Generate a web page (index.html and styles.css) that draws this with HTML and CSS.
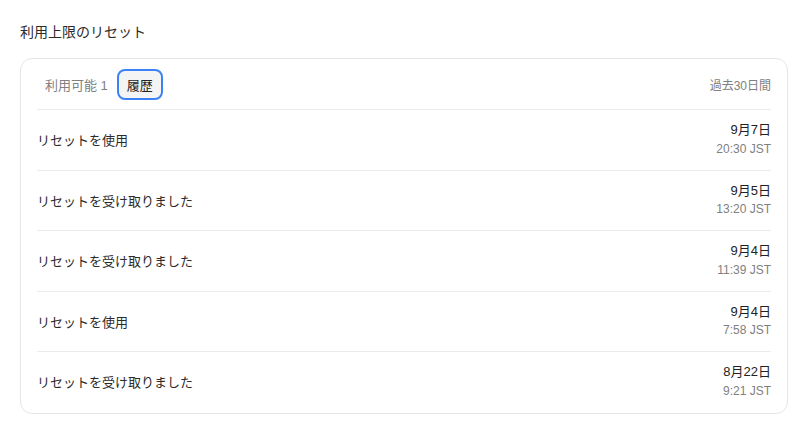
FILE: index.html
```html
<!DOCTYPE html>
<html lang="ja">
<head>
<meta charset="utf-8">
<link rel="stylesheet" href="styles.css">
</head>
<body>
<div class="page">
  <h2 class="title">利用上限のリセット</h2>
  <div class="card">
    <div class="head">
      <div class="head-left">
        <span class="avail">利用可能 1</span>
        <span class="tab">履歴</span>
      </div>
      <span class="range">過去30日間</span>
    </div>
    <div class="row"><span class="label">リセットを使用</span><div class="when"><div class="date">9月7日</div><div class="time">20:30 JST</div></div></div>
    <div class="row"><span class="label">リセットを受け取りました</span><div class="when"><div class="date">9月5日</div><div class="time">13:20 JST</div></div></div>
    <div class="row"><span class="label">リセットを受け取りました</span><div class="when"><div class="date">9月4日</div><div class="time">11:39 JST</div></div></div>
    <div class="row"><span class="label">リセットを使用</span><div class="when"><div class="date">9月4日</div><div class="time">7:58 JST</div></div></div>
    <div class="row last"><span class="label">リセットを受け取りました</span><div class="when"><div class="date">8月22日</div><div class="time">9:21 JST</div></div></div>
  </div>
</div>
</body>
</html>
```

FILE: styles.css
```css
* { box-sizing: border-box; }
html, body { margin: 0; padding: 0; background: #fff; }
body { font-family: "Liberation Sans", "Noto Sans CJK JP", sans-serif; color: #222; }
.page { padding: 22px 17px 0 20px; }
.title { margin: 0 0 16px; font-size: 14px; font-weight: 400; line-height: 20px; color: #2b2b2b; }
.card { border: 1px solid #e6e6e6; border-radius: 12px; padding: 0 16px; }
.head { display: flex; align-items: center; justify-content: space-between; height: 51px; border-bottom: 1px solid #ebebeb; padding-left: 8px; }
.head-left { display: flex; align-items: center; gap: 9px; }
.avail { font-size: 13px; color: #808080; }
.tab { display: inline-flex; align-items: center; justify-content: center; width: 46px; height: 31px; border: 2px solid #3b82f6; border-radius: 8px; background: #f4f4f4; font-size: 13px; color: #222; }
.range { font-size: 12px; color: #808080; }
.row { display: flex; align-items: center; justify-content: space-between; padding: 11px 0; border-bottom: 1px solid #ebebeb; }
.row.last { border-bottom: none; padding-bottom: 12px; }
.label { font-size: 13px; color: #2b2b2b; }
.when { text-align: right; }
.date { font-size: 13px; line-height: 18.75px; color: #222; }
.time { font-size: 12px; line-height: 18.75px; color: #808080; }
```
